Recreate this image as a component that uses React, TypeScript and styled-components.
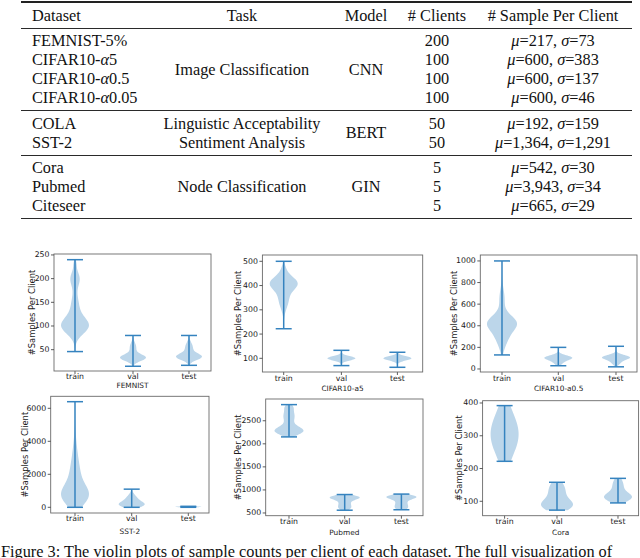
import React, { FC, ReactNode } from 'react';
import styled, { createGlobalStyle } from 'styled-components';

const GlobalStyle = createGlobalStyle`
  html, body {
    margin: 0;
    padding: 0;
    background: #fff;
    font-family: 'Liberation Serif', 'Times New Roman', serif;
  }
`;

const SERIF = `'Liberation Serif', 'Times New Roman', serif`;

const Page = styled.div`
  width: 640px;
  height: 558px;
  overflow: hidden;
  display: flex;
  flex-direction: column;
  font-family: ${SERIF};
  color: #111;
`;

/* ---------- table ---------- */

const StatsTable = styled.div`
  margin: 1px 0 0 21px;
  width: 611px;
  border-top: 2px solid #222;
  font-family: ${SERIF};
  font-size: 16.3px;
  line-height: 19px;
`;

const TableRow = styled.div`
  display: grid;
  grid-template-columns: 139px 164px 84px 58px 166px;
  padding: 2.75px 0;
  border-bottom: 1px solid #2a2a2a;
`;

const Cell = styled.div<{ $left?: boolean; $pad?: number }>`
  display: flex;
  flex-direction: column;
  justify-content: center;
  align-items: ${({ $left }) => ($left ? 'flex-start' : 'center')};
  padding-left: ${({ $pad }) => $pad ?? 0}px;
  font-family: ${SERIF};
  white-space: nowrap;
`;

const M = styled.i`
  font-family: ${SERIF};
  font-style: italic;
`;

const BottomRule = styled.div`
  margin: 3.8px 0 0 21px;
  width: 611px;
  height: 1px;
  background: #222;
`;

type TGroup = {
  dataset: ReactNode[];
  task: ReactNode[];
  model: string;
  clients: string[];
  samples: [string, string][];
};

const groups: TGroup[] = [
  {
    dataset: ['FEMNIST-5%', <>CIFAR10-<M>α</M>5</>, <>CIFAR10-<M>α</M>0.5</>, <>CIFAR10-<M>α</M>0.05</>],
    task: ['Image Classification'],
    model: 'CNN',
    clients: ['200', '100', '100', '100'],
    samples: [['217', '73'], ['600', '383'], ['600', '137'], ['600', '46']],
  },
  {
    dataset: ['COLA', 'SST-2'],
    task: ['Linguistic Acceptability', 'Sentiment Analysis'],
    model: 'BERT',
    clients: ['50', '50'],
    samples: [['192', '159'], ['1,364', '1,291']],
  },
  {
    dataset: ['Cora', 'Pubmed', 'Citeseer'],
    task: ['Node Classification'],
    model: 'GIN',
    clients: ['5', '5', '5'],
    samples: [['542', '30'], ['3,943', '34'], ['665', '29']],
  },
];

const Lines: FC<{ items: ReactNode[] }> = ({ items }) => (
  <>
    {items.map((item, i) => (
      <div key={i}>{item}</div>
    ))}
  </>
);

/* ---------- violin plots ---------- */

type TViolin = {
  name: string;
  x: number;
  min: number;
  max: number;
  half: number;
  bumps: [number, number, number][];
};

type TPanel = {
  label: string;
  box: [number, number, number, number];
  ylim: [number, number];
  ticks: number[];
  yLabelX: number;
  tickLabelY: number;
  xLabelY: number;
  violins: TViolin[];
};

const panels: TPanel[] = [
  {
    label: 'FEMNIST',
    box: [54, 15, 211, 132],
    ylim: [5, 252],
    ticks: [50, 100, 150, 200, 250],
    yLabelX: 31.7,
    tickLabelY: 138,
    xLabelY: 147,
    violins: [
      { name: 'train', x: 75, min: 46, max: 240, half: 14, bumps: [[100, 17, 1], [140, 25, 0.3], [200, 15, 0.35], [232, 8, 0.08]] },
      { name: 'val', x: 133, min: 15, max: 80, half: 13, bumps: [[33, 7, 1], [55, 10, 0.25]] },
      { name: 'test', x: 189, min: 17, max: 80, half: 13, bumps: [[35, 7, 1], [55, 10, 0.3]] },
    ],
  },
  {
    label: 'CIFAR10-a5',
    box: [49.4, 16, 209.7, 133],
    ylim: [43.6, 526],
    ticks: [100, 200, 300, 400, 500],
    yLabelX: 25,
    tickLabelY: 139.3,
    xLabelY: 149.3,
    violins: [
      { name: 'train', x: 70.7, min: 222, max: 500, half: 14, bumps: [[410, 28, 1], [340, 35, 0.35], [470, 20, 0.1]] },
      { name: 'val', x: 128.4, min: 70, max: 133, half: 14, bumps: [[100, 9, 1]] },
      { name: 'test', x: 184.4, min: 63, max: 125, half: 14, bumps: [[100, 9, 1]] },
    ],
  },
  {
    label: 'CIFAR10-a0.5',
    box: [53.3, 16, 210, 133],
    ylim: [-28, 1055],
    ticks: [0, 200, 400, 600, 800, 1000],
    yLabelX: 26.7,
    tickLabelY: 139.3,
    xLabelY: 149.3,
    violins: [
      { name: 'train', x: 75, min: 130, max: 1000, half: 15, bumps: [[430, 70, 1], [300, 90, 0.45], [650, 90, 0.2]] },
      { name: 'val', x: 131.3, min: 30, max: 200, half: 14, bumps: [[105, 22, 1], [60, 25, 0.3]] },
      { name: 'test', x: 189, min: 20, max: 210, half: 14, bumps: [[108, 22, 1], [60, 25, 0.3]] },
    ],
  },
  {
    label: 'SST-2',
    box: [50.7, 7.3, 209, 124],
    ylim: [-345, 6727],
    ticks: [0, 2000, 4000, 6000],
    yLabelX: 25,
    tickLabelY: 130,
    xLabelY: 143,
    violins: [
      { name: 'train', x: 75, min: 0, max: 6400, half: 14, bumps: [[700, 600, 1], [1800, 1000, 0.45], [3500, 900, 0.1]] },
      { name: 'val', x: 131.7, min: 0, max: 1100, half: 13, bumps: [[150, 180, 1], [500, 250, 0.5]] },
      { name: 'test', x: 188.3, min: 0, max: 60, half: 13, bumps: [[30, 30, 1]] },
    ],
  },
  {
    label: 'Pubmed',
    box: [52.7, 10, 210, 126.7],
    ylim: [441, 2972],
    ticks: [500, 1000, 1500, 2000, 2500],
    yLabelX: 25,
    tickLabelY: 132.7,
    xLabelY: 144,
    violins: [
      { name: 'train', x: 76, min: 2150, max: 2850, half: 14.5, bumps: [[2280, 90, 1], [2600, 150, 0.4], [2800, 60, 0.15]] },
      { name: 'val', x: 131.7, min: 560, max: 900, half: 15, bumps: [[840, 50, 1], [700, 80, 0.4], [600, 50, 0.25]] },
      { name: 'test', x: 188.4, min: 570, max: 910, half: 15, bumps: [[850, 50, 1], [700, 80, 0.4], [600, 50, 0.25]] },
    ],
  },
  {
    label: 'Cora',
    box: [55.6, 11.7, 211.6, 126.7],
    ylim: [56, 407],
    ticks: [100, 200, 300, 400],
    yLabelX: 31.7,
    tickLabelY: 132.7,
    xLabelY: 144,
    violins: [
      { name: 'train', x: 77.6, min: 222, max: 392, half: 14, bumps: [[305, 65, 1]] },
      { name: 'val', x: 130, min: 73, max: 158, half: 16, bumps: [[88, 18, 1], [135, 25, 0.55]] },
      { name: 'test', x: 191, min: 95, max: 170, half: 14, bumps: [[112, 14, 1], [150, 20, 0.4]] },
    ],
  },
];

const FigureGrid = styled.div`
  margin-top: 16.2px;
  display: grid;
  grid-template-columns: repeat(3, 213.33px);
  grid-template-rows: repeat(2, 150px);
`;

const PanelSvg = styled.svg`
  display: block;
  overflow: visible;
  font-family: 'DejaVu Sans', 'Liberation Sans', sans-serif;
`;

const AxisText = styled.text<{ $size?: number }>`
  font-size: ${({ $size }) => $size ?? 7.8}px;
  fill: #1a1a1a;
`;

const BLUE = '#3583bf';

const violinPath = (v: TViolin, y: (n: number) => number) => {
  const n = 56;
  const pts: [number, number][] = [];
  for (let i = 0; i <= n; i++) {
    const val = v.min + ((v.max - v.min) * i) / n;
    const d = v.bumps.reduce((s, [m, sd, w]) => s + w * Math.exp(-0.5 * ((val - m) / sd) ** 2), 0);
    pts.push([val, d]);
  }
  const peak = Math.max(...pts.map((p) => p[1]));
  const right = pts.map(([val, d]) => `${(v.x + (d / peak) * v.half).toFixed(2)},${y(val).toFixed(2)}`);
  const left = [...pts].reverse().map(([val, d]) => `${(v.x - (d / peak) * v.half).toFixed(2)},${y(val).toFixed(2)}`);
  return `M${right.join(' L')} L${left.join(' L')} Z`;
};

const ViolinPanel: FC<{ spec: TPanel }> = ({ spec }) => {
  const [l, t, r, b] = spec.box;
  const [y0, y1] = spec.ylim;
  const y = (v: number) => t + ((y1 - v) / (y1 - y0)) * (b - t);
  const midY = (t + b) / 2;
  return (
    <PanelSvg width="213.33" height="150" viewBox="0 0 213.33 150">
      {spec.violins.map((v) => (
        <g key={v.name}>
          <path d={violinPath(v, y)} fill="#bcd6ea" />
          <line x1={v.x} x2={v.x} y1={y(v.min)} y2={y(v.max)} stroke={BLUE} strokeWidth={1.5} />
          <line x1={v.x - 8} x2={v.x + 8} y1={y(v.min)} y2={y(v.min)} stroke={BLUE} strokeWidth={1.5} />
          <line x1={v.x - 8} x2={v.x + 8} y1={y(v.max)} y2={y(v.max)} stroke={BLUE} strokeWidth={1.5} />
          <line x1={v.x} x2={v.x} y1={b} y2={b + 3} stroke="#333" strokeWidth={0.8} />
          <AxisText x={v.x} y={spec.tickLabelY} textAnchor="middle" dominantBaseline="central">
            {v.name}
          </AxisText>
        </g>
      ))}
      <rect x={l} y={t} width={r - l} height={b - t} fill="none" stroke="#6a6a6a" strokeWidth={0.9} />
      {spec.ticks.map((tk) => (
        <g key={tk}>
          <line x1={l - 3} x2={l} y1={y(tk)} y2={y(tk)} stroke="#333" strokeWidth={0.8} />
          <AxisText x={l - 4.5} y={y(tk)} textAnchor="end" dominantBaseline="central">
            {tk}
          </AxisText>
        </g>
      ))}
      <AxisText
        $size={8.4}
        x={spec.yLabelX}
        y={midY}
        textAnchor="middle"
        dominantBaseline="central"
        transform={`rotate(-90 ${spec.yLabelX} ${midY})`}
      >
        #Samples Per Client
      </AxisText>
      <AxisText $size={7.4} x={(l + r) / 2} y={spec.xLabelY} textAnchor="middle" dominantBaseline="central">
        {spec.label}
      </AxisText>
    </PanelSvg>
  );
};

const Caption = styled.p`
  margin: 3px 0 0 1px;
  font-family: ${SERIF};
  font-size: 16.3px;
  line-height: 19px;
  white-space: nowrap;
`;

const App: FC = () => (
  <Page>
    <GlobalStyle />
    <StatsTable>
      <TableRow>
        <Cell $left $pad={11}>Dataset</Cell>
        <Cell>Task</Cell>
        <Cell>Model</Cell>
        <Cell># Clients</Cell>
        <Cell $pad={8}># Sample Per Client</Cell>
      </TableRow>
      {groups.map((g, i) => (
        <TableRow key={i}>
          <Cell $left $pad={11}>
            <Lines items={g.dataset} />
          </Cell>
          <Cell>
            <Lines items={g.task} />
          </Cell>
          <Cell>{g.model}</Cell>
          <Cell>
            <Lines items={g.clients} />
          </Cell>
          <Cell $pad={8}>
            <Lines
              items={g.samples.map(([mu, sigma]) => (
                <>
                  <M>μ</M>={mu}, <M>σ</M>={sigma}
                </>
              ))}
            />
          </Cell>
        </TableRow>
      ))}
    </StatsTable>
    <BottomRule />
    <FigureGrid>
      {panels.map((p) => (
        <ViolinPanel key={p.label} spec={p} />
      ))}
    </FigureGrid>
    <Caption>
      Figure 3: The violin plots of sample counts per client of each dataset. The full visualization of
    </Caption>
  </Page>
);

export default App;
